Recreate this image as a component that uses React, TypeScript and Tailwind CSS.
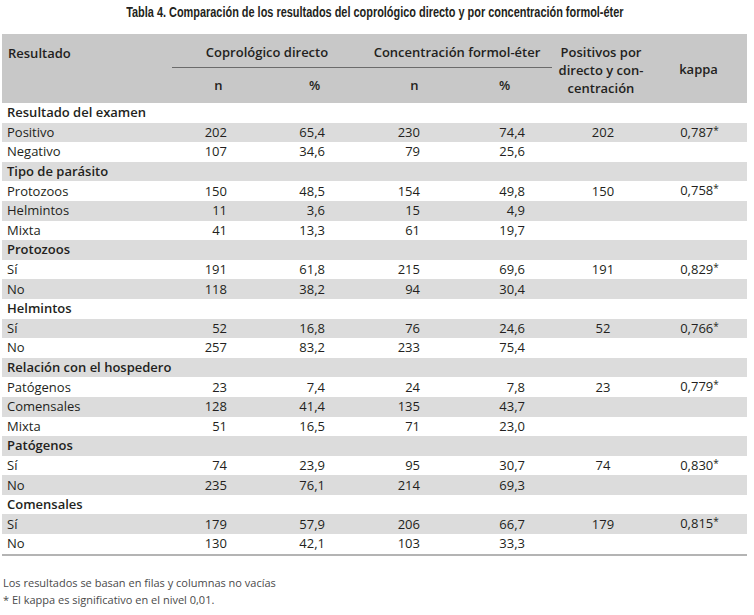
import React from "react";

type Row = { label: string; head?: boolean; n1?: string; p1?: string; n2?: string; p2?: string; pos?: string; k?: string };

const rows: Row[] = [
  { label: "Resultado del examen", head: true },
  { label: "Positivo", n1: "202", p1: "65,4", n2: "230", p2: "74,4", pos: "202", k: "0,787*" },
  { label: "Negativo", n1: "107", p1: "34,6", n2: "79", p2: "25,6" },
  { label: "Tipo de parásito", head: true },
  { label: "Protozoos", n1: "150", p1: "48,5", n2: "154", p2: "49,8", pos: "150", k: "0,758*" },
  { label: "Helmintos", n1: "11", p1: "3,6", n2: "15", p2: "4,9" },
  { label: "Mixta", n1: "41", p1: "13,3", n2: "61", p2: "19,7" },
  { label: "Protozoos", head: true },
  { label: "Sí", n1: "191", p1: "61,8", n2: "215", p2: "69,6", pos: "191", k: "0,829*" },
  { label: "No", n1: "118", p1: "38,2", n2: "94", p2: "30,4" },
  { label: "Helmintos", head: true },
  { label: "Sí", n1: "52", p1: "16,8", n2: "76", p2: "24,6", pos: "52", k: "0,766*" },
  { label: "No", n1: "257", p1: "83,2", n2: "233", p2: "75,4" },
  { label: "Relación con el hospedero", head: true },
  { label: "Patógenos", n1: "23", p1: "7,4", n2: "24", p2: "7,8", pos: "23", k: "0,779*" },
  { label: "Comensales", n1: "128", p1: "41,4", n2: "135", p2: "43,7" },
  { label: "Mixta", n1: "51", p1: "16,5", n2: "71", p2: "23,0" },
  { label: "Patógenos", head: true },
  { label: "Sí", n1: "74", p1: "23,9", n2: "95", p2: "30,7", pos: "74", k: "0,830*" },
  { label: "No", n1: "235", p1: "76,1", n2: "214", p2: "69,3" },
  { label: "Comensales", head: true },
  { label: "Sí", n1: "179", p1: "57,9", n2: "206", p2: "66,7", pos: "179", k: "0,815*" },
  { label: "No", n1: "130", p1: "42,1", n2: "103", p2: "33,3" },
];

const grid = "grid grid-cols-[170px_95px_95px_95px_95px_98px_97px]";

function Kappa({ v }: { v?: string }) {
  if (!v) return null;
  const base = v.replace("*", "");
  return (
    <span>
      {base}
      <span className="relative top-[-3px] text-[10px]">*</span>
    </span>
  );
}

export default function App() {
  return (
    <div
      className="w-[754px] h-[615px] bg-white text-[#231f20] overflow-hidden"
      style={{ fontFamily: "'Open Sans', 'Noto Sans', sans-serif" }}
    >
      <div className="w-[745px] ml-[2px]">
        <div className="h-[34px] flex items-start justify-center pt-[3px] whitespace-nowrap">
          <span
            className="inline-block text-[14px] font-bold leading-[18px] scale-x-[0.78] origin-center"
            style={{ fontFamily: "'Liberation Sans', Arial, sans-serif" }}
          >
            Tabla 4. Comparación de los resultados del coprológico directo y por concentración formol-éter
          </span>
        </div>

        {/* header */}
        <div className={`${grid} bg-[#c8c8c8] h-[69px] text-[13px] font-semibold`}>
          <div className="pl-[6px] pt-[9px] leading-[20px]">Resultado</div>
          <div className="col-span-4 flex flex-col">
            <div className="flex h-[34px] border-b border-[#6b6b6b]">
              <div className="w-[190px] flex items-center justify-center pt-[4px]">Coprológico directo</div>
              <div className="w-[190px] flex items-center justify-center pt-[4px]">Concentración formol-éter</div>
            </div>
            <div className="flex h-[35px] items-center">
              <div className="w-[95px] text-center pr-[2px]">n</div>
              <div className="w-[95px] text-center">%</div>
              <div className="w-[95px] text-center pl-[10px]">n</div>
              <div className="w-[95px] text-center">%</div>
            </div>
          </div>
          <div className="flex items-center justify-center text-center leading-[18px] pt-[2px]">
            Positivos por
            <br />
            directo y con-
            <br />
            centración
          </div>
          <div className="flex items-center justify-center pt-[2px]">kappa</div>
        </div>

        {/* body */}
        <div className="border-b-2 border-[#b4b4b4]">
          {rows.map((r, i) => (
            <div
              key={i}
              className={`${grid} h-[19.6px] items-center text-[13px] leading-[19px] ${i % 2 === 1 ? "bg-[#dcdcdc]" : "bg-white"}`}
            >
              <div className={`pl-[5px] whitespace-nowrap ${r.head ? "font-semibold" : ""}`}>{r.label}</div>
              <div className="text-right pr-[40px]">{r.n1}</div>
              <div className="text-right pr-[37px]">{r.p1}</div>
              <div className="text-right pr-[37px]">{r.n2}</div>
              <div className="text-right pr-[27px]">{r.p2}</div>
              <div className="text-center pl-[4px]">{r.pos}</div>
              <div className="text-center pl-[2px]">
                <Kappa v={r.k} />
              </div>
            </div>
          ))}
        </div>

        <div className="mt-[18px] text-[11px] leading-[17px] text-[#4a4a4a] pl-[1px]">
          <div>Los resultados se basan en filas y columnas no vacías</div>
          <div>* El kappa es significativo en el nivel 0,01.</div>
        </div>
      </div>
    </div>
  );
}
